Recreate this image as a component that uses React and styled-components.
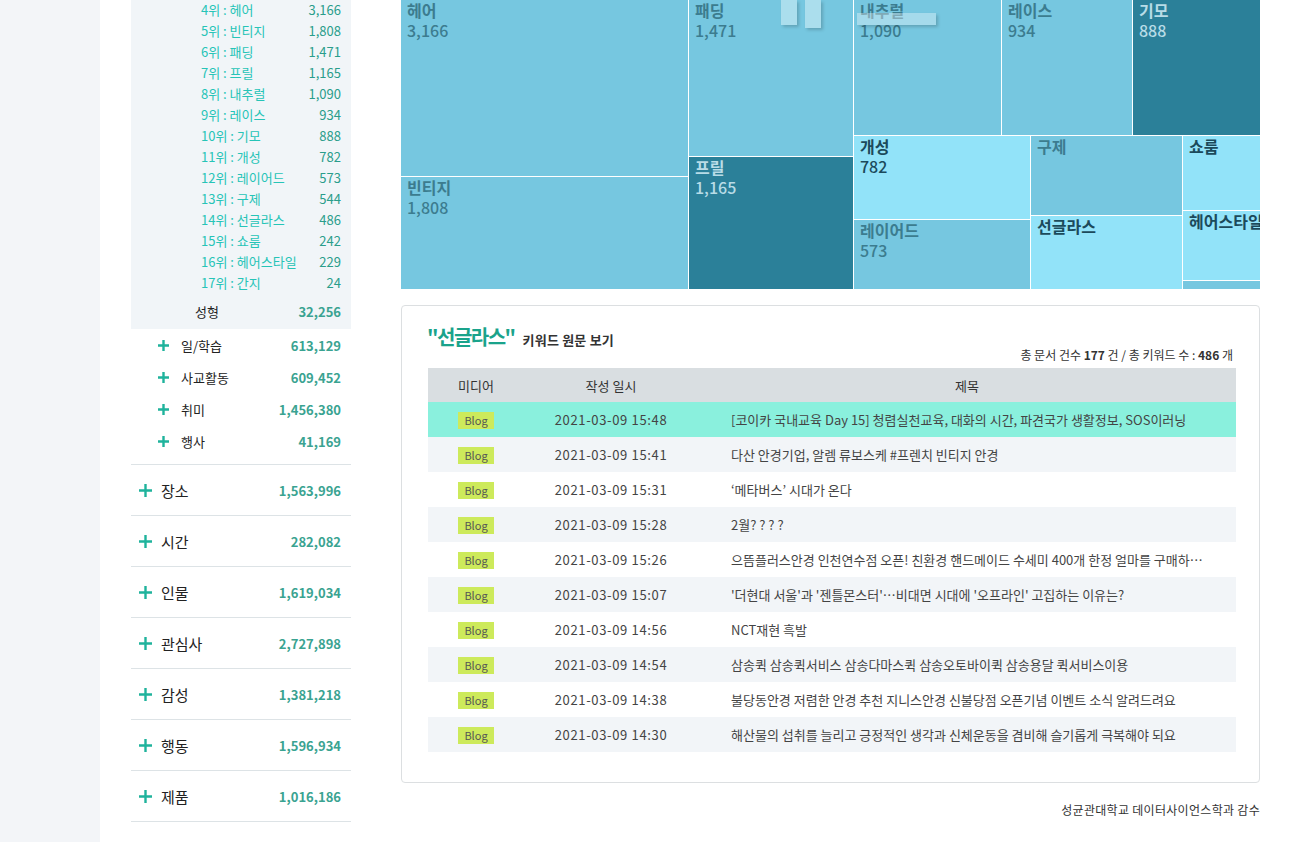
import React from 'react';
import styled, { createGlobalStyle } from 'styled-components';

const GlobalStyle = createGlobalStyle`
  body {
    margin: 0;
    background: #f3f5f8;
    font-family: "Noto Sans CJK KR", "Noto Sans", sans-serif;
    color: #333;
  }
`;

const ranks = [
  ['4위 : 헤어', '3,166'], ['5위 : 빈티지', '1,808'], ['6위 : 패딩', '1,471'],
  ['7위 : 프릴', '1,165'], ['8위 : 내추럴', '1,090'], ['9위 : 레이스', '934'],
  ['10위 : 기모', '888'], ['11위 : 개성', '782'], ['12위 : 레이어드', '573'],
  ['13위 : 구제', '544'], ['14위 : 선글라스', '486'], ['15위 : 쇼룸', '242'],
  ['16위 : 헤어스타일', '229'], ['17위 : 간지', '24'],
];

const subs = [['일/학습', '613,129'], ['사교활동', '609,452'], ['취미', '1,456,380'], ['행사', '41,169']];

const mains = [
  ['장소', '1,563,996'], ['시간', '282,082'], ['인물', '1,619,034'], ['관심사', '2,727,898'],
  ['감성', '1,381,218'], ['행동', '1,596,934'], ['제품', '1,016,186'],
];

// treemap cells: x, y, w, h relative to the chart, tone
const cells = [
  { name: '헤어', value: '3,166', x: 0, y: 0, w: 287, h: 176, tone: 'mid' },
  { name: '빈티지', value: '1,808', x: 0, y: 177, w: 287, h: 112, tone: 'mid' },
  { name: '패딩', value: '1,471', x: 288, y: 0, w: 164, h: 156, tone: 'mid' },
  { name: '프릴', value: '1,165', x: 288, y: 157, w: 164, h: 132, tone: 'dark' },
  { name: '내추럴', value: '1,090', x: 453, y: 0, w: 147, h: 135, tone: 'mid' },
  { name: '레이스', value: '934', x: 601, y: 0, w: 130, h: 135, tone: 'mid' },
  { name: '기모', value: '888', x: 732, y: 0, w: 127, h: 135, tone: 'dark' },
  { name: '개성', value: '782', x: 453, y: 136, w: 176, h: 83, tone: 'light' },
  { name: '레이어드', value: '573', x: 453, y: 220, w: 176, h: 69, tone: 'mid' },
  { name: '구제', value: '', x: 630, y: 136, w: 151, h: 79, tone: 'mid' },
  { name: '선글라스', value: '', x: 630, y: 216, w: 151, h: 73, tone: 'light' },
  { name: '쇼룸', value: '', x: 782, y: 136, w: 77, h: 74, tone: 'light' },
  { name: '헤어스타일', value: '', x: 782, y: 211, w: 77, h: 69, tone: 'light' },
  { name: '', value: '', x: 782, y: 281, w: 77, h: 8, tone: 'mid' },
];

const docs = [
  ['2021-03-09 15:48', '[코이카 국내교육 Day 15] 청렴실천교육, 대화의 시간, 파견국가 생활정보, SOS이러닝'],
  ['2021-03-09 15:41', '다산 안경기업, 알렘 류보스케 #프렌치 빈티지 안경'],
  ['2021-03-09 15:31', '‘메타버스’ 시대가 온다'],
  ['2021-03-09 15:28', '2월? ? ? ?'],
  ['2021-03-09 15:26', '으뜸플러스안경 인천연수점 오픈! 친환경 핸드메이드 수세미 400개 한정 얼마를 구매하시든 사은품 증정'],
  ['2021-03-09 15:07', "'더현대 서울'과 '젠틀몬스터'…비대면 시대에 '오프라인' 고집하는 이유는?"],
  ['2021-03-09 14:56', 'NCT재현 흑발'],
  ['2021-03-09 14:54', '삼송퀵 삼송퀵서비스 삼송다마스퀵 삼송오토바이퀵 삼송용달 퀵서비스이용'],
  ['2021-03-09 14:38', '불당동안경 저렴한 안경 추천 지니스안경 신불당점 오픈기념 이벤트 소식 알려드려요'],
  ['2021-03-09 14:30', '해산물의 섭취를 늘리고 긍정적인 생각과 신체운동을 겸비해 슬기롭게 극복해야 되요'],
];

const Page = styled.div`
  margin-left: 100px;
  width: 1201px;
  min-height: 842px;
  background: #fff;
  display: flex;
  gap: 50px;
  padding-left: 31px;
  box-sizing: border-box;
`;

const LeftPanel = styled.aside`
  width: 220px;
  flex-shrink: 0;
`;

const RankBox = styled.div`
  background: #f1f5f8;
  margin-top: -1px;
`;

const RankRow = styled.div`
  height: 21px;
  display: flex;
  align-items: center;
  justify-content: space-between;
  padding: 0 10px 0 70px;
  font-size: 13px;
`;

const RankLabel = styled.span`
  color: #26c4b7;
`;

const RankValue = styled.span`
  color: #2a9d8b;
`;

const SummaryRow = styled.div`
  height: 36px;
  display: flex;
  align-items: center;
  justify-content: space-between;
  padding: 0 10px 0 64px;
  font-size: 13px;
  color: #222;
`;

const BoldValue = styled.span`
  font-weight: 700;
  font-size: 13px;
  color: #3aa391;
`;

const SubGroup = styled.div`
  padding-bottom: 7px;
  border-bottom: 1px solid #dde3e6;
`;

const SubRow = styled.div`
  height: 32px;
  display: flex;
  align-items: center;
  padding: 0 10px 0 27px;
  font-size: 13px;
  color: #222;
`;

const MainRow = styled.div`
  height: 50px;
  display: flex;
  align-items: center;
  padding: 0 10px 0 8px;
  font-size: 15px;
  color: #222;
  border-bottom: 1px solid #dde3e6;
`;

const Label = styled.span`
  flex: 1;
  margin-left: ${(p) => p.$gap}px;
`;

const Plus = ({ size, stroke }) => (
  <svg width={size} height={size} viewBox={`0 0 ${size} ${size}`} style={{ flexShrink: 0 }}>
    <path
      d={`M${size / 2} 0V${size}M0 ${size / 2}H${size}`}
      stroke="#1fb39c"
      strokeWidth={stroke}
      fill="none"
    />
  </svg>
);

const RightColumn = styled.main`
  width: 859px;
  flex-shrink: 0;
`;

const Treemap = styled.div`
  position: relative;
  height: 289px;
  background: #fff;
  overflow: hidden;
`;

const tones = {
  mid: { bg: '#76c7e0', text: '#3c7c8f' },
  dark: { bg: '#2b8099', text: '#b8dce7' },
  light: { bg: '#92e3f9', text: '#1b4a5b' },
};

const Cell = styled.div`
  position: absolute;
  overflow: hidden;
  box-sizing: border-box;
  padding: 1px 6px 0;
  background: ${(p) => tones[p.$tone].bg};
  white-space: nowrap;
`;

const CellName = styled.div`
  font-size: 16px;
  line-height: 19px;
  font-weight: 700;
  color: ${(p) => tones[p.$tone].text};
`;

const CellValue = styled.div`
  font-size: 16px;
  line-height: 20px;
  font-weight: 500;
  color: ${(p) => tones[p.$tone].text};
`;

const Ghost = styled.div`
  position: absolute;
  background: ${(p) => (p.$clear ? 'rgba(255,255,255,0.35)' : 'rgba(190,230,242,0.75)')};
  box-shadow: 2px 2px 3px rgba(0, 0, 0, 0.18);
`;

const Card = styled.section`
  margin-top: 16px;
  border: 1px solid #dcdfe1;
  border-radius: 4px;
  padding: 17px 25px 30px 25px;
`;

const TitleRow = styled.div`
  display: flex;
  align-items: baseline;
  height: 28px;
`;

const Keyword = styled.span`
  font-size: 20px;
  font-weight: 700;
  color: #1aa38b;
  line-height: 28px;
  letter-spacing: -1.5px;
`;

const TitleSub = styled.span`
  margin-left: 8px;
  font-size: 13px;
  font-weight: 700;
  color: #333;
  letter-spacing: 0.2px;
`;

const Count = styled.div`
  margin-top: -4px;
  margin-bottom: 5px;
  text-align: right;
  font-size: 12px;
  line-height: 16px;
  color: #333;
  padding-right: 1px;
  b { font-weight: 700; }
`;

const Table = styled.table`
  width: 808px;
  margin-left: 1px;
  border-collapse: collapse;
  table-layout: fixed;
  font-size: 13px;
`;

const Th = styled.th`
  height: 34px;
  padding: 0;
  background: #d9dee1;
  font-weight: 400;
  color: #333;
  width: ${(p) => p.$w || 'auto'};
`;

const Tr = styled.tr`
  height: 35px;
  background: ${(p) => (p.$active ? '#8af0dd' : p.$alt ? '#f2f5f8' : '#fff')};
`;

const Td = styled.td`
  padding: ${(p) => (p.$left ? '0 30px 0 33px' : '0')};
  text-align: ${(p) => (p.$left ? 'left' : 'center')};
  color: #444;
  white-space: nowrap;
  overflow: hidden;
  text-overflow: ellipsis;
  letter-spacing: ${(p) => (p.$wide ? '0.65px' : '0')};
`;

const Badge = styled.span`
  display: inline-block;
  width: 36px;
  height: 17px;
  line-height: 17px;
  background: #cdea5b;
  font-size: 11px;
  color: #555;
  vertical-align: middle;
`;

const Footer = styled.div`
  margin-top: 18px;
  text-align: right;
  font-size: 12px;
  line-height: 18px;
  color: #333;
  letter-spacing: 0.3px;
`;

export default function App() {
  return (
    <>
      <GlobalStyle />
      <Page>
        <LeftPanel>
          <RankBox>
            {ranks.map(([l, v]) => (
              <RankRow key={l}>
                <RankLabel>{l}</RankLabel>
                <RankValue>{v}</RankValue>
              </RankRow>
            ))}
            <SummaryRow>
              <span>성형</span>
              <BoldValue>32,256</BoldValue>
            </SummaryRow>
          </RankBox>
          <SubGroup>
            {subs.map(([l, v]) => (
              <SubRow key={l}>
                <Plus size={11} stroke={2.4} />
                <Label $gap={12}>{l}</Label>
                <BoldValue>{v}</BoldValue>
              </SubRow>
            ))}
          </SubGroup>
          {mains.map(([l, v]) => (
            <MainRow key={l}>
              <Plus size={13} stroke={2.4} />
              <Label $gap={9}>{l}</Label>
              <BoldValue>{v}</BoldValue>
            </MainRow>
          ))}
        </LeftPanel>
        <RightColumn>
          <Treemap>
            {cells.map((c, i) => (
              <Cell key={i} $tone={c.tone} style={{ left: c.x, top: c.y, width: c.w, height: c.h }}>
                <CellName $tone={c.tone}>{c.name}</CellName>
                <CellValue $tone={c.tone}>{c.value}</CellValue>
              </Cell>
            ))}
            <Ghost style={{ left: 380, top: 0, width: 16, height: 25 }} />
            <Ghost style={{ left: 404, top: 0, width: 16, height: 28 }} />
            <Ghost $clear style={{ left: 456, top: 13, width: 79, height: 12 }} />
          </Treemap>
          <Card>
            <TitleRow>
              <Keyword>"선글라스"</Keyword>
              <TitleSub>키워드 원문 보기</TitleSub>
            </TitleRow>
            <Count>
              총 문서 건수 <b>177</b> 건 / 총 키워드 수 : <b>486</b> 개
            </Count>
            <Table>
              <thead>
                <tr>
                  <Th $w="96px">미디어</Th>
                  <Th $w="174px">작성 일시</Th>
                  <Th>제목</Th>
                </tr>
              </thead>
              <tbody>
                {docs.map(([d, t], i) => (
                  <Tr key={i} $active={i === 0} $alt={i % 2 === 1}>
                    <Td><Badge>Blog</Badge></Td>
                    <Td $wide>{d}</Td>
                    <Td $left>{t}</Td>
                  </Tr>
                ))}
              </tbody>
            </Table>
          </Card>
          <Footer>성균관대학교 데이터사이언스학과 감수</Footer>
        </RightColumn>
      </Page>
    </>
  );
}
